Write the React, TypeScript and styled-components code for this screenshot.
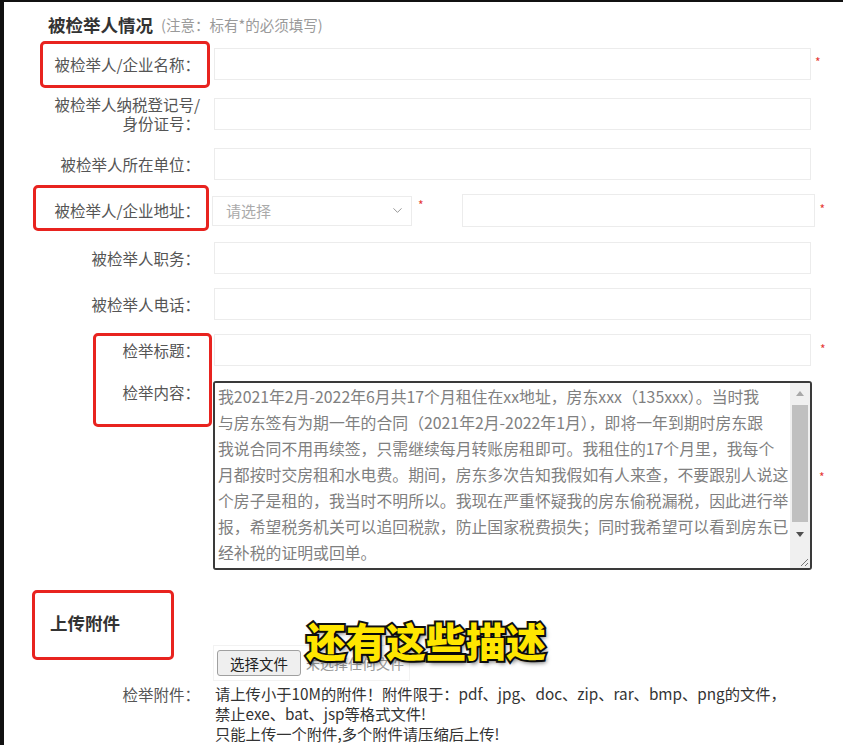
import React from 'react';
import styled, { createGlobalStyle } from 'styled-components';
import { ChevronDown } from 'lucide-react';

const GlobalStyle = createGlobalStyle`
  html, body {
    margin: 0;
    padding: 0;
    background: #111;
  }
  * {
    box-sizing: border-box;
  }
`

const Frame = styled.div`
  position: relative;
  width: 843px;
  height: 745px;
  overflow: hidden;
  background: #fff;
  border-left: 4px solid #111;
  border-top: 2px solid #111;
  font-family: "Noto Sans CJK SC", "Noto Sans", "Liberation Sans", sans-serif;
  color: #555;
`

const SectionTitle = styled.div<{ $top: number; $left: number }>`
  margin-top: ${p => p.$top}px;
  padding-left: ${p => p.$left}px;
  height: 24px;
  display: flex;
  align-items: center;
  b {
    font-size: 17.5px;
    line-height: 24px;
    font-weight: 700;
    color: #333;
  }
  span {
    margin-left: 8px;
    font-size: 14.5px;
    line-height: 24px;
    color: #9a9a9a;
  }
`

const Row = styled.div<{ $top: number; $align?: string }>`
  display: flex;
  align-items: ${p => p.$align || 'center'};
  margin-top: ${p => p.$top}px;
`

const Label = styled.div<{ $pad?: number; $squeeze?: boolean }>`
  width: 196px;
  flex-shrink: 0;
  text-align: right;
  font-size: 15.5px;
  line-height: 19px;
  color: #555;
  padding-top: ${p => p.$pad || 0}px;
  margin: ${p => (p.$squeeze ? '-3px 0' : '0')};
`

const TextInput = styled.input<{ $left?: number; $width?: number; $height?: number }>`
  margin-left: ${p => p.$left ?? 14}px;
  width: ${p => p.$width ?? 597}px;
  height: ${p => p.$height ?? 32}px;
  border: 1px solid #ececec;
  background: #fff;
  outline: none;
  padding: 0 10px;
  font: inherit;
`

const Star = styled.span<{ $left?: number; $shift?: number }>`
  margin-left: ${p => p.$left ?? 4}px;
  align-self: ${p => (p.$shift !== undefined ? 'flex-start' : 'center')};
  margin-top: ${p => p.$shift ?? 0}px;
  color: #e53935;
  font-size: 12px;
  line-height: 12px;
`

const SelectBox = styled.div`
  margin-left: 12px;
  width: 200px;
  height: 30px;
  border: 1px solid #ececec;
  display: flex;
  align-items: center;
  justify-content: space-between;
  padding: 0 6px 0 13px;
  font-size: 15px;
  color: #aaa;
  svg {
    color: #888;
  }
`

const AreaBox = styled.div`
  margin-left: 13px;
  width: 599px;
  height: 189px;
  border: 2px solid #3a3a3a;
  border-radius: 3px;
  display: flex;
  overflow: hidden;
`

const Area = styled.textarea`
  flex: 1;
  border: none;
  outline: none;
  resize: none;
  overflow: hidden;
  padding: 1px 0 0 3px;
  font-family: inherit;
  font-size: 15.85px;
  line-height: 26px;
  color: #808080;
  background: #fff;
  white-space: pre;
`

const ScrollBar = styled.div`
  width: 20px;
  display: flex;
  flex-direction: column;
  background: #f0f0f0;
`

const ArrowButton = styled.div<{ $down?: boolean }>`
  height: 20px;
  display: flex;
  align-items: center;
  justify-content: center;
  &::after {
    content: '';
    width: 0;
    height: 0;
    border-left: 4px solid transparent;
    border-right: 4px solid transparent;
    ${p => (p.$down ? 'border-top: 5px solid #505050;' : 'border-bottom: 5px solid #a8a8a8;')}
  }
`

const Track = styled.div`
  flex: 1;
  padding: 2px 2px;
  display: flex;
`

const Thumb = styled.div`
  flex: 1;
  background: #c0c0c0;
`

const Corner = styled.div`
  height: 24px;
  display: flex;
  align-items: flex-end;
  justify-content: flex-end;
  padding: 0 1px 1px 0;
`

const UploadBlock = styled.div`
  display: flex;
  flex-direction: column;
  margin-left: 13px;
`

const FileBox = styled.div`
  width: 197px;
  display: flex;
  align-items: center;
  border: 1px solid #f2f2f2;
  padding: 4px 3px;
  white-space: nowrap;
  overflow: hidden;
  span {
    margin-left: 5px;
    font-size: 14px;
    color: #999;
  }
`

const FileButton = styled.button`
  width: 84px;
  height: 26px;
  flex-shrink: 0;
  padding: 0;
  background: #efefef;
  border: 1px solid #a0a0a0;
  border-radius: 3px;
  font-family: inherit;
  font-size: 14.5px;
  color: #222;
`

const Help = styled.div`
  margin-top: 2px;
  padding-left: 2px;
  font-size: 15.3px;
  line-height: 20px;
  color: #333;
`

const RedBox = styled.div<{ $x: number; $y: number; $w: number; $h: number }>`
  position: absolute;
  left: ${p => p.$x}px;
  top: ${p => p.$y}px;
  width: ${p => p.$w}px;
  height: ${p => p.$h}px;
  border: 3px solid #e8231f;
  border-radius: 5px;
  pointer-events: none;
`

const Subtitle = styled.div`
  position: absolute;
  left: 302px;
  top: 612px;
  font-size: 40px;
  line-height: 52px;
  font-weight: 900;
  color: #ffe600;
  -webkit-text-stroke: 4px #111;
  paint-order: stroke fill;
  text-shadow: 2px 3px 4px rgba(0, 0, 0, 0.55);
`

const complaint = [
  '我2021年2月-2022年6月共17个月租住在xx地址，房东xxx（135xxx）。当时我',
  '与房东签有为期一年的合同（2021年2月-2022年1月），即将一年到期时房东跟',
  '我说合同不用再续签，只需继续每月转账房租即可。我租住的17个月里，我每个',
  '月都按时交房租和水电费。期间，房东多次告知我假如有人来查，不要跟别人说这',
  '个房子是租的，我当时不明所以。我现在严重怀疑我的房东偷税漏税，因此进行举',
  '报，希望税务机关可以追回税款，防止国家税费损失；同时我希望可以看到房东已',
  '经补税的证明或回单。',
].join('\n')

export default function App() {
  return (
    <Frame>
      <GlobalStyle />
      <SectionTitle $top={11} $left={44}>
        <b>被检举人情况</b>
        <span>(注意：标有*的必须填写)</span>
      </SectionTitle>

      <Row $top={11}>
        <Label>被检举人/企业名称：</Label>
        <TextInput />
        <Star $shift={8}>*</Star>
      </Row>

      <Row $top={18}>
        <Label $squeeze>
          被检举人纳税登记号/
          <br />
          身份证号：
        </Label>
        <TextInput />
      </Row>

      <Row $top={18}>
        <Label>被检举人所在单位：</Label>
        <TextInput />
      </Row>

      <Row $top={14}>
        <Label>被检举人/企业地址：</Label>
        <SelectBox>
          请选择
          <ChevronDown size={15} strokeWidth={1.4} />
        </SelectBox>
        <Star $left={6} $shift={5}>*</Star>
        <TextInput $left={38} $width={353} $height={33} />
        <Star $left={5} $shift={9}>*</Star>
      </Row>

      <Row $top={15}>
        <Label>被检举人职务：</Label>
        <TextInput />
      </Row>

      <Row $top={14}>
        <Label>被检举人电话：</Label>
        <TextInput />
      </Row>

      <Row $top={14}>
        <Label>检举标题：</Label>
        <TextInput />
        <Star $left={9} $shift={9}>*</Star>
      </Row>

      <Row $top={15} $align="flex-start">
        <Label $pad={2}>检举内容：</Label>
        <AreaBox>
          <Area wrap="off" defaultValue={complaint} />
          <ScrollBar>
            <ArrowButton />
            <Track>
              <Thumb />
            </Track>
            <ArrowButton $down />
            <Corner>
              <svg width="10" height="10" viewBox="0 0 10 10">
                <path d="M9 2 L2 9 M9 6 L6 9" stroke="#777" strokeWidth="1" />
              </svg>
            </Corner>
          </ScrollBar>
        </AreaBox>
        <Star $left={7} $shift={90}>*</Star>
      </Row>

      <SectionTitle $top={41} $left={46}>
        <b>上传附件</b>
      </SectionTitle>

      <Row $top={10}>
        <Label>检举附件：</Label>
        <UploadBlock>
          <FileBox>
            <FileButton type="button">选择文件</FileButton>
            <span>未选择任何文件</span>
          </FileBox>
          <Help>
            请上传小于10M的附件！附件限于：pdf、jpg、doc、zip、rar、bmp、png的文件，
            <br />
            禁止exe、bat、jsp等格式文件!
            <br />
            只能上传一个附件,多个附件请压缩后上传!
          </Help>
        </UploadBlock>
      </Row>

      <RedBox $x={36} $y={39} $w={170} $h={47} />
      <RedBox $x={29} $y={183} $w={176} $h={46} />
      <RedBox $x={89} $y={331} $w={119} $h={94} />
      <RedBox $x={28} $y={588} $w={142} $h={70} />

      <Subtitle>还有这些描述</Subtitle>
    </Frame>
  );
}
